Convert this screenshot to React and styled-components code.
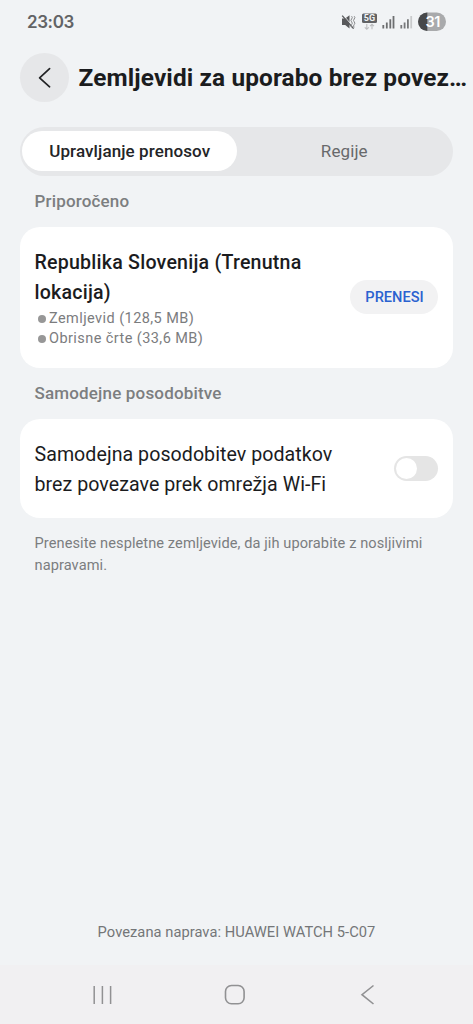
import React from "react";
import styled, { createGlobalStyle } from "styled-components";

const GlobalStyle = createGlobalStyle`
  *, *::before, *::after { box-sizing: border-box; }
  body { margin: 0; background: #f1f3f5; }
  button { border: 0; padding: 0; font: inherit; color: inherit; }
`;

const Screen = styled.div`
  width: 100%;
  height: 1024px;
  overflow: hidden;
  display: flex;
  flex-direction: column;
  background: #f1f3f5;
  color: #1b1c1e;
  font-family: Roboto, "Noto Sans", sans-serif;
`;

const StatusBar = styled.header`
  flex: none;
  height: 44px;
  padding: 0 27px;
  display: flex;
  align-items: center;
  justify-content: space-between;
`;

const Clock = styled.span`
  font: 600 17px/20px Inter, Roboto, sans-serif;
  letter-spacing: -0.4px;
  color: #626365;
`;

const StatusIcons = styled.svg`
  display: block;
  width: 106px;
  height: 22px;
`;

const TitleBar = styled.div`
  flex: none;
  margin-top: 9px;
  height: 49px;
  padding-left: 20px;
  display: flex;
  align-items: center;
`;

const BackButton = styled.button`
  flex: none;
  width: 49px;
  height: 49px;
  margin-right: 9.5px;
  border-radius: 50%;
  background: #e6e7e9;
  display: grid;
  place-items: center;
`;

const Title = styled.h1`
  margin: 0;
  font-size: 24.4px;
  line-height: 32px;
  font-weight: 700;
  letter-spacing: 0.12px;
  white-space: nowrap;
`;

const Tabs = styled.div`
  flex: none;
  height: 49px;
  margin: 25px 20px 0;
  padding: 4px 2px 5px;
  border-radius: 25px;
  background: #e6e7e9;
  display: grid;
  grid-template-columns: 1fr 1fr;
`;

const Tab = styled.button`
  padding-left: 1px;
  border-radius: 21px;
  font-size: 17px;
  font-weight: ${(p) => (p.$active ? 500 : 400)};
  letter-spacing: 0.1px;
  color: ${(p) => (p.$active ? "#242527" : "#68696b")};
  background: ${(p) => (p.$active ? "#fff" : "transparent")};
`;

const SectionTitle = styled.h2`
  margin: ${(p) => p.$top}px 34.5px 0;
  font-size: 17px;
  line-height: 20px;
  font-weight: 500;
  letter-spacing: 0.17px;
  color: #7c7e80;
`;

const Card = styled.section`
  flex: none;
  height: ${(p) => p.$height}px;
  margin: ${(p) => p.$top}px 20px 0;
  padding: 0 15px 1px 14.5px;
  border-radius: 20px;
  background: #fff;
  display: flex;
  align-items: center;
  justify-content: space-between;
`;

const CardText = styled.div`
  padding-top: 4px;
  font-size: 19.6px;
  line-height: 30px;
  font-weight: ${(p) => p.$weight};
  letter-spacing: ${(p) => p.$spacing};
  white-space: nowrap;
`;

const DetailList = styled.ul`
  margin: 1px 0 1px;
  padding: 0 0 0 3px;
  list-style: none;
  font-size: 14.5px;
  line-height: 20px;
  font-weight: 400;
  letter-spacing: 0.43px;
  color: #7b7c7e;
`;

const Detail = styled.li`
  display: flex;
  align-items: center;
  gap: 3.5px;

  &::before {
    content: "";
    width: 8px;
    height: 8px;
    border-radius: 50%;
    background: #979797;
  }
`;

const DownloadButton = styled.button`
  flex: none;
  width: 88px;
  height: 34px;
  padding-left: 1px;
  border-radius: 17px;
  background: #f2f2f3;
  color: #2b62d0;
  font-size: 14.6px;
  font-weight: 500;
`;

const Switch = styled.button`
  flex: none;
  width: 44px;
  height: 25px;
  padding: 2px;
  border-radius: 13px;
  background: #e5e5e5;

  &::before {
    content: "";
    display: block;
    width: 21px;
    height: 21px;
    border-radius: 50%;
    background: #fff;
  }
`;

const Hint = styled.p`
  margin: 14px 34.5px 0;
  font-size: 14.6px;
  line-height: 22px;
  letter-spacing: 0.08px;
  color: #7b7d7f;
  white-space: nowrap;
`;

const DeviceLabel = styled.footer`
  margin-top: auto;
  height: 66px;
  padding-top: 22px;
  text-align: center;
  font-size: 14.7px;
  line-height: 22px;
  letter-spacing: 0.04px;
  color: #747678;
`;

const NavBar = styled.nav`
  flex: none;
  height: 59px;
  padding-right: 4px;
  background: #f1f0f2;
  display: flex;
  justify-content: center;
  align-items: center;
  gap: 102px;
`;

const NavButton = styled.button`
  width: 30px;
  height: 30px;
  background: none;

  svg { display: block; }
`;

function StatusGlyphs() {
  return (
    <StatusIcons viewBox="340 11 106 22">
      <path d="M342 18.6h3.2l4.3-3.4v13.4L345.2 25H342z" fill="#58595b" />
      <path d="M343 15l11 12.5" stroke="#f1f3f5" strokeWidth="1" />
      <path d="M342.2 15.6l11.4 13" stroke="#58595b" strokeWidth="1.4" />
      <path d="M351.6 16.2q1.4 1.4 0 2.8t0 2.8q1.4 1.4 0 2.8t0 2.8M354.2 16.2q1.4 1.4 0 2.8t0 2.8q1.4 1.4 0 2.8t0 2.8" fill="none" stroke="#88898b" />
      <rect x="362" y="13.5" width="15" height="9.5" rx="1.5" fill="#626365" />
      <text x="369.5" y="21.4" textAnchor="middle" fontFamily="Roboto, sans-serif" fontSize="9" fontWeight="700" fill="#f1f3f5">5G</text>
      <path d="M366.8 24v5M364.8 27.3l2 2 2-2M372 29.3v-5M370 26.2l2-2 2 2" fill="none" stroke="#bcbdbf" strokeWidth="1.1" />
      <path d="M383.3 25v3.4M386.8 22.5v5.9M390.3 19.3v9.1M393.5 16v12.4" stroke="#6d6e70" strokeWidth="1.8" />
      <path d="M401.3 25v3.4M404.6 22.5v5.9M407.9 19.3v9.1" stroke="#77787a" strokeWidth="1.8" />
      <path d="M411.2 16v12.4" stroke="#c9cacc" strokeWidth="1.8" />
      <rect x="418" y="12.5" width="28" height="18.5" rx="9.25" fill="#a9aaac" />
      <path d="M427.3 12.5a9.25 9.25 0 0 0 0 18.5z" fill="#47484a" />
      <text x="432.6" y="27.2" textAnchor="middle" fontFamily="Inter, sans-serif" fontSize="14.5" fontWeight="600" letterSpacing="-0.6" fill="#fff">31</text>
    </StatusIcons>
  );
}

export default function App() {
  return (
    <Screen>
      <GlobalStyle />
      <StatusBar>
        <Clock>23:03</Clock>
        <StatusGlyphs />
      </StatusBar>

      <TitleBar>
        <BackButton aria-label="Nazaj">
          <svg width="20" height="24" viewBox="0 0 20 24" fill="none" stroke="#222325" strokeWidth="1.7">
            <path d="M14.6 2.6L4.6 11.8l10 9" strokeLinecap="round" strokeLinejoin="round" />
          </svg>
        </BackButton>
        <Title>Zemljevidi za uporabo brez povez…</Title>
      </TitleBar>

      <Tabs>
        <Tab $active>Upravljanje prenosov</Tab>
        <Tab>Regije</Tab>
      </Tabs>

      <SectionTitle $top={15}>Priporočeno</SectionTitle>
      <Card $top={16} $height={141}>
        <CardText $weight={500} $spacing="0.22px">
          Republika Slovenija (Trenutna<br />lokacija)
          <DetailList>
            <Detail>Zemljevid (128,5 MB)</Detail>
            <Detail>Obrisne črte (33,6 MB)</Detail>
          </DetailList>
        </CardText>
        <DownloadButton>PRENESI</DownloadButton>
      </Card>

      <SectionTitle $top={15}>Samodejne posodobitve</SectionTitle>
      <Card $top={16} $height={99}>
        <CardText $weight={400} $spacing="0.05px">
          Samodejna posodobitev podatkov<br />brez povezave prek omrežja Wi-Fi
        </CardText>
        <Switch role="switch" aria-checked="false" />
      </Card>

      <Hint>
        Prenesite nespletne zemljevide, da jih uporabite z nosljivimi<br />napravami.
      </Hint>

      <DeviceLabel>Povezana naprava: HUAWEI WATCH 5-C07</DeviceLabel>

      <NavBar>
        <NavButton aria-label="Nedavno">
          <svg width="30" height="30" viewBox="0 0 30 30" stroke="#919193" strokeWidth="1.5">
            <path d="M6.2 6v18M14.4 6v18M22.6 6v18" />
          </svg>
        </NavButton>
        <NavButton aria-label="Domov">
          <svg width="30" height="30" viewBox="0 0 30 30" fill="none" stroke="#919193" strokeWidth="1.6">
            <rect x="5.5" y="5.5" width="18.6" height="18.2" rx="6" />
          </svg>
        </NavButton>
        <NavButton aria-label="Nazaj">
          <svg width="30" height="30" viewBox="0 0 30 30" fill="none" stroke="#919193" strokeWidth="1.6">
            <path d="M21.5 5.5L10 14.7l11.5 9.3" />
          </svg>
        </NavButton>
      </NavBar>
    </Screen>
  );
}
